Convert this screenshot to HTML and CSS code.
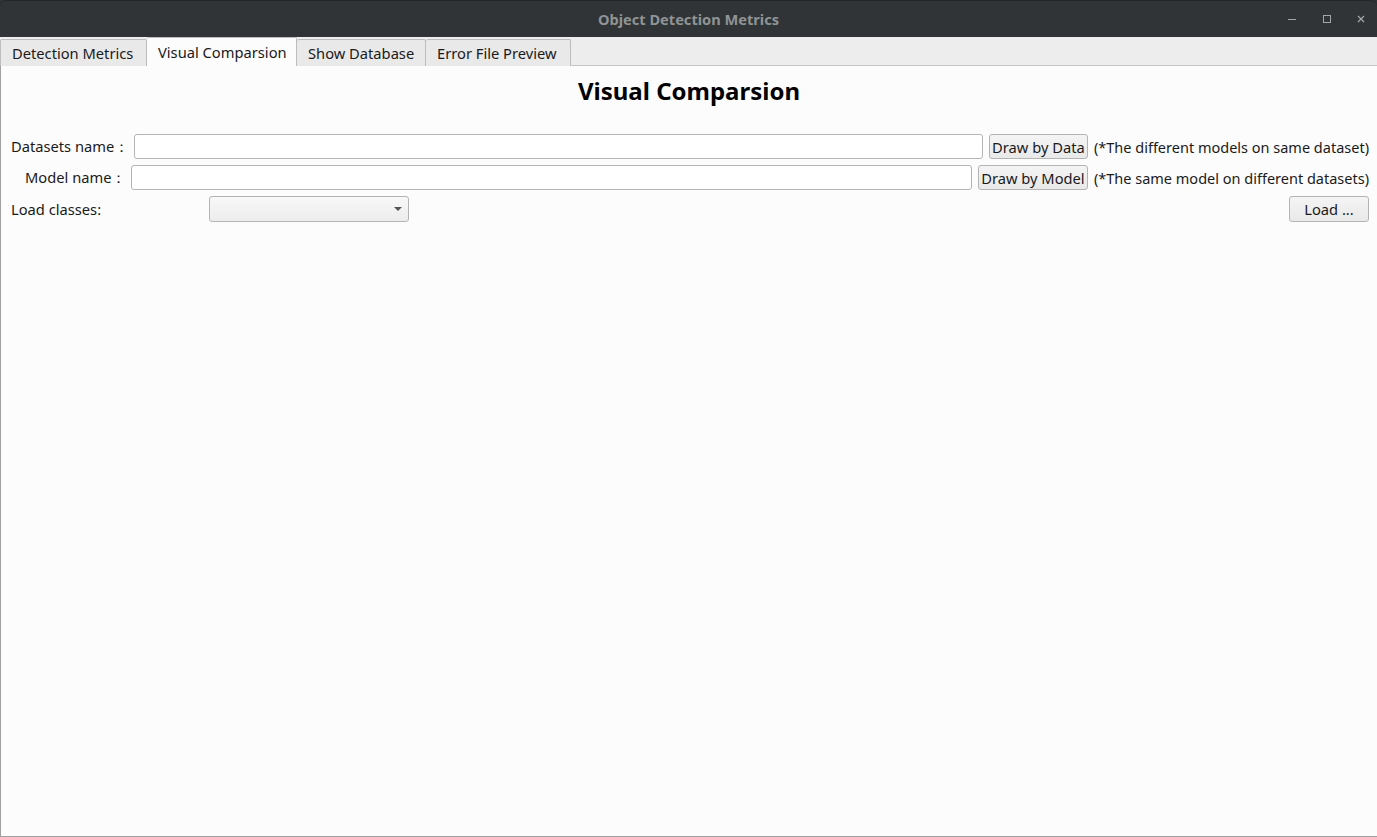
FILE: index.html
```html
<!DOCTYPE html>
<html>
<head>
<meta charset="utf-8">
<link rel="stylesheet" href="styles.css">
</head>
<body>
<div class="window">
  <div class="titlebar">
    <div class="title">Object Detection Metrics</div>
    <div class="controls">
      <svg class="ctl" width="12" height="12" viewBox="0 0 12 12"><line x1="1" y1="6.5" x2="9" y2="6.5" stroke="#a4a7a8" stroke-width="1"/></svg>
      <svg class="ctl" width="12" height="12" viewBox="0 0 12 12"><rect x="2.5" y="2.5" width="7" height="7" fill="none" stroke="#a4a7a8" stroke-width="1"/></svg>
      <svg class="ctl" width="12" height="12" viewBox="0 0 12 12"><path d="M3 3 L9 9 M9 3 L3 9" stroke="#a4a7a8" stroke-width="1.2"/></svg>
    </div>
  </div>
  <div class="tabbar">
    <div class="tab first">Detection Metrics</div>
    <div class="tab active">Visual Comparsion</div>
    <div class="tab">Show Database</div>
    <div class="tab">Error File Preview</div>
  </div>
  <div class="pane">
    <h1 class="heading">Visual Comparsion</h1>
    <div class="row row1">
      <span class="label">Datasets name：</span>
      <div class="input"></div>
      <div class="btn btn-data">Draw by Data</div>
      <span class="note">(*The different models on same dataset)</span>
    </div>
    <div class="row row2">
      <span class="label label-model">Model name：</span>
      <div class="input"></div>
      <div class="btn btn-model">Draw by Model</div>
      <span class="note">(*The same model on different datasets)</span>
    </div>
    <div class="row row3">
      <span class="label label-load">Load classes:</span>
      <div class="combo"><span class="arrow"></span></div>
      <div class="spacer"></div>
      <div class="btn btn-load">Load ...</div>
    </div>
  </div>
</div>
</body>
</html>
```

FILE: styles.css
```css
html, body {
  margin: 0;
  padding: 0;
  width: 1377px;
  height: 837px;
  overflow: hidden;
  background: #2f3335;
  font-family: "Noto Sans", "DejaVu Sans", sans-serif;
  font-size: 14.7px;
  color: #1a1a1a;
}
.window {
  display: flex;
  flex-direction: column;
  height: 837px;
}
.titlebar {
  height: 37px;
  flex: none;
  background: #303436;
  border-top: 1px solid #23272a;
  border-radius: 6px 6px 0 0;
  box-sizing: border-box;
  display: flex;
  align-items: center;
  justify-content: center;
  position: relative;
}
.title {
  color: #8f9394;
  font-weight: bold;
  font-size: 14.6px;
  margin-top: -1px;
}
.controls {
  position: absolute;
  right: 10px;
  top: 12px;
  display: flex;
  gap: 22px;
}
.ctl { display: block; }
.tabbar {
  height: 29px;
  flex: none;
  background: #ededed;
  display: flex;
  align-items: flex-end;
  border-bottom: 1px solid #c4c4c4;
  box-sizing: border-box;
}
.tab {
  box-sizing: border-box;
  border: 1px solid #bdbdbd;
  border-bottom: none;
  border-left: none;
  background: #e9e9e9;
  border-radius: 2px 2px 0 0;
  display: flex;
  align-items: center;
  padding: 0 0 0 11px;
  color: #1a1a1a;
  margin-bottom: -1px;
  height: 27px;
  white-space: nowrap;
}
.tab.first { border-left: 1px solid #bdbdbd; width: 147px; }
.tab.active {
  background: #fcfcfc;
  height: 29px;
  width: 150px;
  padding-left: 11px;
}
.tab:nth-child(3) { width: 129px; }
.tab:nth-child(4) { width: 145px; }
.pane {
  flex: 1;
  background: #fcfcfc;
  border-left: 1px solid #a0a0a0;
  border-bottom: 1px solid #a0a0a0;
  display: flex;
  flex-direction: column;
}
.heading {
  margin: 10px 0 0 0;
  text-align: center;
  font-size: 24px;
  font-weight: bold;
  line-height: 30px;
  color: #000;
}
.row {
  display: flex;
  align-items: center;
  height: 25px;
  padding: 0 8px 0 10px;
}
.row1 { margin-top: 28px; }
.row2 { margin-top: 6px; }
.row3 { margin-top: 6px; height: 26px; }
.label { white-space: nowrap; }
.row1 .label { width: 123px; }
.label-model { padding-left: 14px; width: 106px; }
.label-load { width: 198px; }
.input {
  flex: 1;
  height: 25px;
  box-sizing: border-box;
  border: 1px solid #b4b4b4;
  border-radius: 3px;
  background: #fff;
}
.btn {
  height: 25px;
  box-sizing: border-box;
  border: 1px solid #b4b4b4;
  border-radius: 3px;
  background: linear-gradient(#f4f4f4, #e9e9e9);
  display: flex;
  align-items: center;
  justify-content: center;
  white-space: nowrap;
}
.btn-data { width: 99px; margin-left: 6px; }
.btn-model { width: 110px; margin-left: 6px; }
.note { margin-left: 6px; white-space: nowrap; font-size: 14.5px; }
.combo {
  width: 200px;
  height: 26px;
  box-sizing: border-box;
  border: 1px solid #b4b4b4;
  border-radius: 3px;
  background: linear-gradient(#f8f8f8, #ececec);
  position: relative;
}
.arrow {
  position: absolute;
  right: 6px;
  top: 10px;
  width: 0;
  height: 0;
  border-left: 4px solid transparent;
  border-right: 4px solid transparent;
  border-top: 4px solid #555;
}
.spacer { flex: 1; }
.btn-load { width: 80px; height: 26px; }
```
